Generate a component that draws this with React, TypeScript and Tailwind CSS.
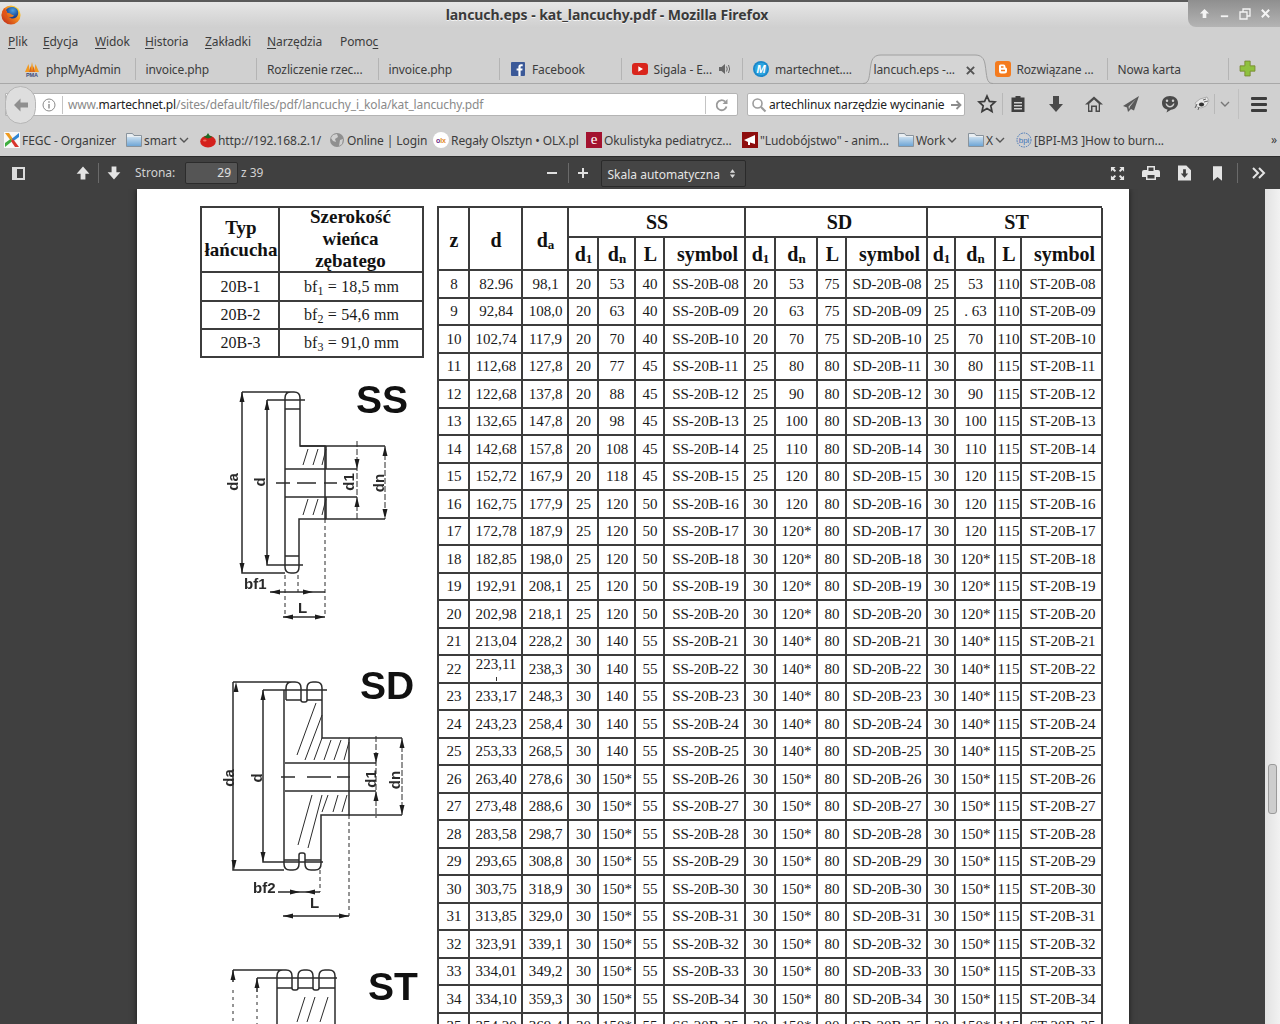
import React from "react";

const cols = "grid grid-cols-[31px_53px_46px_30px_37px_29px_81px_30px_42px_29px_81px_28px_40px_26px_81px]";
const line = "border-[#3c3c3c]";

type Row = [number, string, string, string, string, string, string, string, string, string, string, string];
const base: Row[] = [
  [8, "82.96", "98,1", "20", "53", "40", "20", "53", "75", "25", "53", "110"],
  [9, "92,84", "108,0", "20", "63", "40", "20", "63", "75", "25", ". 63", "110"],
  [10, "102,74", "117,9", "20", "70", "40", "20", "70", "75", "25", "70", "110"],
  [11, "112,68", "127,8", "20", "77", "45", "25", "80", "80", "30", "80", "115"],
  [12, "122,68", "137,8", "20", "88", "45", "25", "90", "80", "30", "90", "115"],
  [13, "132,65", "147,8", "20", "98", "45", "25", "100", "80", "30", "100", "115"],
  [14, "142,68", "157,8", "20", "108", "45", "25", "110", "80", "30", "110", "115"],
  [15, "152,72", "167,9", "20", "118", "45", "25", "120", "80", "30", "120", "115"],
  [16, "162,75", "177,9", "25", "120", "50", "30", "120", "80", "30", "120", "115"],
  [17, "172,78", "187,9", "25", "120", "50", "30", "120*", "80", "30", "120", "115"],
  [18, "182,85", "198,0", "25", "120", "50", "30", "120*", "80", "30", "120*", "115"],
  [19, "192,91", "208,1", "25", "120", "50", "30", "120*", "80", "30", "120*", "115"],
  [20, "202,98", "218,1", "25", "120", "50", "30", "120*", "80", "30", "120*", "115"],
  ...([
    [21, "213,04", "228,2"],
    [22, "223,11", "238,3"],
    [23, "233,17", "248,3"],
    [24, "243,23", "258,4"],
    [25, "253,33", "268,5"],
  ] as [number, string, string][]).map((r): Row => [r[0], r[1], r[2], "30", "140", "55", "30", "140*", "80", "30", "140*", "115"]),
  ...([
    [26, "263,40", "278,6"],
    [27, "273,48", "288,6"],
    [28, "283,58", "298,7"],
    [29, "293,65", "308,8"],
    [30, "303,75", "318,9"],
    [31, "313,85", "329,0"],
    [32, "323,91", "339,1"],
    [33, "334,01", "349,2"],
    [34, "334,10", "359,3"],
    [35, "354,20", "369,4"],
  ] as [number, string, string][]).map((r): Row => [r[0], r[1], r[2], "30", "150*", "55", "30", "150*", "80", "30", "150*", "115"]),
];

function Cell({ children, className = "", pad = "pl-[2px]" }: { children?: React.ReactNode; className?: string; pad?: string }) {
  return (
    <div className={`flex items-center justify-center border-r-2 border-b-2 ${line} whitespace-nowrap ${pad} ${className}`}>
      {children}
    </div>
  );
}

function DataRow({ r }: { r: Row }) {
  const z = String(r[0]);
  return (
    <div className={`${cols} h-[27.5px] text-[15px] text-[#1a1a1a]`}>
      <Cell>{z}</Cell>
      {r[0] === 22 ? (
        <Cell className="relative items-start">
          <span className="leading-[16px]">{r[1]}</span>
          <span className="absolute left-[26px] top-[21px] h-[4px] w-[1px] bg-[#333]" />
        </Cell>
      ) : (
        <Cell>{r[1]}</Cell>
      )}
      <Cell>{r[2]}</Cell>
      <Cell>{r[3]}</Cell>
      <Cell>{r[4]}</Cell>
      <Cell>{r[5]}</Cell>
      <Cell pad="pl-[3px]">SS-20B-{z.padStart(2, "0")}</Cell>
      <Cell>{r[6]}</Cell>
      <Cell>{r[7]}</Cell>
      <Cell>{r[8]}</Cell>
      <Cell>SD-20B-{z.padStart(2, "0")}</Cell>
      <Cell>{r[9]}</Cell>
      <Cell>{r[10]}</Cell>
      <Cell>{r[11]}</Cell>
      <Cell pad="pl-[3px]">ST-20B-{z.padStart(2, "0")}</Cell>
    </div>
  );
}

function DataTable() {
  const subScript = "bottom-[-5px] text-[13px]";
  const sub = (
    <>
      <Cell>d<sub className={subScript}>1</sub></Cell>
      <Cell>d<sub className={subScript}>n</sub></Cell>
      <Cell pad="pl-[3px]">L</Cell>
      <Cell pad="pl-[7px]">symbol</Cell>
    </>
  );
  return (
    <div className={`w-[665px] border-l-2 border-t-2 ${line}`}>
      <div className={`${cols} grid-rows-[30px_33px] text-[20px] font-bold text-[#111]`}>
        <Cell className="row-span-2 pt-[3px]">z</Cell>
        <Cell className="row-span-2 pt-[3px]">d</Cell>
        <Cell className="row-span-2 pt-[3px]">d<sub className={subScript}>a</sub></Cell>
        <Cell className="col-span-4">SS</Cell>
        <Cell className="col-span-4" pad="pl-[8px]">SD</Cell>
        <Cell className="col-span-4" pad="pl-[5px]">ST</Cell>
        {sub}
        {sub}
        {sub}
      </div>
      {base.map((r) => (
        <DataRow key={r[0]} r={r} />
      ))}
    </div>
  );
}

function ChainTable() {
  return (
    <div className={`w-[224px] border-l-2 border-t-2 ${line} grid grid-cols-[78px_144px] grid-rows-[65px_29px_28px_28px] text-[16px] text-[#1a1a1a]`}>
      <Cell pad="pl-[3px]" className="pb-[2px] text-center text-[19px] font-bold leading-[22px] text-[#111]">
        <span>Typ<br />łańcucha</span>
      </Cell>
      <Cell pad="pl-0" className="pb-[2px] text-center text-[19px] font-bold leading-[22px] text-[#111]">
        <span>Szerokość<br />wieńca<br />zębatego</span>
      </Cell>
      <Cell>20B-1</Cell>
      <Cell className="tracking-[0.15px]"><span>bf<sub>1</sub> = 18,5 mm</span></Cell>
      <Cell>20B-2</Cell>
      <Cell className="tracking-[0.15px]"><span>bf<sub>2</sub> = 54,6 mm</span></Cell>
      <Cell>20B-3</Cell>
      <Cell className="tracking-[0.15px]"><span>bf<sub>3</sub> = 91,0 mm</span></Cell>
    </div>
  );
}

function Arrow({ x, y, dir }: { x: number; y: number; dir: "u" | "d" | "l" | "r" }) {
  const p =
    dir === "u" ? `${x},${y} ${x - 2.5},${y + 10} ${x + 2.5},${y + 10}` :
    dir === "d" ? `${x},${y} ${x - 2.5},${y - 10} ${x + 2.5},${y - 10}` :
    dir === "l" ? `${x},${y} ${x + 10},${y - 2.5} ${x + 10},${y + 2.5}` :
    `${x},${y} ${x - 10},${y - 2.5} ${x - 10},${y + 2.5}`;
  return <polygon points={p} fill="#1c1c1c" stroke="none" />;
}

const dimText = { fontFamily: "'Liberation Sans',sans-serif", fontWeight: 700, fontSize: 15, fill: "#2a2a2a", stroke: "none" } as const;
const bigText = { fontFamily: "'Liberation Sans',sans-serif", fontWeight: 700, fontSize: 39, fill: "#111", stroke: "none" } as const;

function V({ x, y, t }: { x: number; y: number; t: string }) {
  return (
    <text x={x} y={y} textAnchor="middle" transform={`rotate(-90 ${x} ${y})`} style={dimText}>
      {t}
    </text>
  );
}

function Diagrams() {
  return (
    <svg viewBox="200 358 240 666" className="block h-[666px] w-[240px] blur-[0.35px]" fill="none" stroke="#2b2b2b" strokeWidth="1.5">
      {/* SS */}
      <text x="356" y="413" style={bigText}>SS</text>
      <path d="M242 392H291Q285 392 285 398V567Q285 573 291 573H294Q299 573 299 567V519H325V446H300V398Q300 392 294 392H291" />
      <path d="M285 409H300M285 556H299M285 469H326V446M285 497H326V519M326 469H357M326 497H357M300 446H385M325 519H385" />
      <path d="M242 392V573H285M267 400V565H303M267 400H305" />
      <path d="M325 519V617M285 575V617M298 575V592" strokeDasharray="4 3" strokeWidth="1" />
      <path d="M276 483H290M297 483H316M324 483H337" />
      <path d="M303 465L308 449M313 465L318 449M322 465L326 449M303 515L308 499M313 515L318 499M322 515L326 499" strokeWidth="1" />
      <path d="M357 441V521M385 446V519" strokeWidth="1" strokeDasharray="6 2" />
      <path d="M270 592H325M283 617H325" />
      <Arrow x={242} y={392} dir="u" /><Arrow x={242} y={573} dir="d" />
      <Arrow x={267} y={400} dir="u" /><Arrow x={267} y={565} dir="d" />
      <Arrow x={357} y={469} dir="d" /><Arrow x={357} y={497} dir="u" />
      <Arrow x={385} y={446} dir="u" /><Arrow x={385} y={519} dir="d" />
      <Arrow x={270} y={592} dir="l" /><Arrow x={313} y={592} dir="r" />
      <Arrow x={283} y={617} dir="l" /><Arrow x={325} y={617} dir="r" />
      <V x={238} y={482} t="da" /><V x={265} y={482} t="d" /><V x={354} y={482} t="d1" /><V x={384} y={483} t="dn" />
      <text x="244" y="589" style={dimText}>bf1</text>
      <text x="298" y="613" style={dimText}>L</text>

      {/* SD */}
      <text x="360" y="699" style={bigText}>SD</text>
      <path d="M233 682H292Q286 682 286 688V700M286 700H301V688Q301 682 295 682H292M301 700Q301 702 303 702H305Q307 702 307 700V688Q307 682 313 682H316Q322 682 322 688V738H349V815H321V864Q321 870 315 870H311Q305 870 305 864V855Q305 853 303 853H301Q299 853 299 855V864Q299 870 293 870H290Q284 870 284 864V690" />
      <path d="M307 700H322M284 860H299M305 860H321M285 763H376M285 791H376M349 738H402M349 815H402" />
      <path d="M233 682V870H284M263 690H327M263 690V862H323" />
      <path d="M349 815V916M320 870V892" strokeDasharray="4 3" strokeWidth="1" />
      <path d="M281 777H295M307 777H331M337 777H350" />
      <path d="M297 755L316 703M305 760L322 715M314 760L322 738M324 760L331 740M334 760L341 740M344 760L349 742M298 845L312 795M308 848L322 795M322 812L328 795M333 812L338 795M342 812L347 795" strokeWidth="1" />
      <path d="M376 736V818M402 738V815" strokeWidth="1" strokeDasharray="6 2" />
      <path d="M278 892H320M283 916H349" />
      <Arrow x={236} y={682} dir="u" /><Arrow x={234} y={870} dir="d" />
      <Arrow x={263} y={690} dir="u" /><Arrow x={263} y={862} dir="d" />
      <Arrow x={376} y={763} dir="d" /><Arrow x={376} y={791} dir="u" />
      <Arrow x={402} y={738} dir="u" /><Arrow x={402} y={815} dir="d" />
      <Arrow x={300} y={892} dir="r" /><Arrow x={305} y={892} dir="l" />
      <Arrow x={283} y={916} dir="l" /><Arrow x={349} y={916} dir="r" />
      <V x={234} y={778} t="da" /><V x={262} y={778} t="d" /><V x={376} y={779} t="d1" /><V x={400} y={780} t="dn" />
      <text x="253" y="893" style={dimText}>bf2</text>
      <text x="310" y="908" style={dimText}>L</text>

      {/* ST */}
      <text x="368" y="1000" style={bigText}>ST</text>
      <path d="M233 970H283Q277 970 277 976V1024M277 988H292V976Q292 970 286 970H283M292 988Q292 990 294 990H296Q298 990 298 988V976Q298 970 304 970H307Q313 970 313 976V988Q313 990 315 990H317Q319 990 319 988V976Q319 970 325 970H329Q335 970 335 976V1024M298 988H313M319 988H335M257 978H337M257 978V992M233 970V982" />
      <path d="M233 990V1024M257 995V1024" strokeDasharray="3 4" strokeWidth="1" />
      <path d="M297 1022L305 997M307 1022L315 997M320 1022L328 997" strokeWidth="1" />
      <Arrow x={233} y={970} dir="u" /><Arrow x={257} y={978} dir="u" />
    </svg>
  );
}

/* ---------- icons ---------- */

function FirefoxLogo() {
  return (
    <svg viewBox="0 0 20 20" className="h-[20px] w-[20px]">
      <defs>
        <radialGradient id="fxb" cx="55%" cy="30%" r="60%">
          <stop offset="0%" stopColor="#4aa0e0" />
          <stop offset="100%" stopColor="#17408f" />
        </radialGradient>
        <linearGradient id="fxo" x1="0.9" y1="0.2" x2="0.2" y2="0.9">
          <stop offset="0%" stopColor="#f9d63a" />
          <stop offset="45%" stopColor="#f0821c" />
          <stop offset="100%" stopColor="#c8381a" />
        </linearGradient>
      </defs>
      <circle cx="10" cy="10" r="9.6" fill="url(#fxo)" />
      <path d="M5 5C7 1.5 13 0.8 16 4C18 7 17.5 10.5 15 12.5C13 14 9.5 13.8 8 12C10 12.5 12 12 13 10.5C11.5 10 9.5 9.5 9 8.3C8 8.3 6.5 8 6 7.5C6.3 6.5 5.5 6 5 5Z" fill="url(#fxb)" />
      <path d="M1 8C2 5 3 4 4 3C4 5 5 6 6 7C5 9 6 11 7.5 12.5C5 12 3 11 1 8Z" fill="#e2541a" />
    </svg>
  );
}

function PmaIcon() {
  return (
    <svg viewBox="0 0 16 16" className="h-[16px] w-[16px] shrink-0">
      <path d="M1 11L4.5 3L6 11ZM6 11L8 1L10 11ZM10 11L11.5 3L15 11Z" fill="#f29a1f" />
      <path d="M5 11L6.5 5L8 11ZM8 11L9.5 5L11 11Z" fill="#d9661f" />
      <text x="8" y="16" textAnchor="middle" fontSize="5.5" fontWeight="700" fill="#3c4a78" fontFamily="'Liberation Sans',sans-serif">PMA</text>
    </svg>
  );
}

function FolderIcon() {
  return (
    <svg viewBox="0 0 16 16" className="h-[16px] w-[16px] shrink-0">
      <defs>
        <linearGradient id="fld" x1="0" y1="0" x2="0" y2="1">
          <stop offset="0%" stopColor="#c9deef" />
          <stop offset="100%" stopColor="#6fa6d6" />
        </linearGradient>
      </defs>
      <path d="M0.5 1.5H6.5L8 3.5H15.5V14.5H0.5Z" fill="#e9eef2" stroke="#7f8a94" strokeWidth="0.9" />
      <path d="M1 5H15V14H1Z" fill="url(#fld)" />
    </svg>
  );
}

function ChevDown({ color = "#555" }: { color?: string }) {
  return (
    <svg viewBox="0 0 10 6" className="h-[6px] w-[10px] shrink-0" fill="none" stroke={color} strokeWidth="1.4">
      <path d="M1 1L5 5L9 1" />
    </svg>
  );
}

function Tb({ d, size = 20, fill = "#4a4a4a" }: { d: string; size?: number; fill?: string }) {
  return (
    <svg viewBox="0 0 20 20" style={{ width: size, height: size }} className="shrink-0">
      <path d={d} fill={fill} fillRule="evenodd" />
    </svg>
  );
}

/* ---------- browser chrome ---------- */

function TitleBar() {
  return (
    <div className="relative flex h-[28px] items-center justify-center border-t-2 border-[#5a5a5a] bg-gradient-to-b from-[#e6e6e6] to-[#cfcfcf] pb-[2px]">
      <div className="absolute left-[1px] top-[3px]"><FirefoxLogo /></div>
      <span className="ml-[-66px] text-[14px] font-bold tracking-[-0.05px] text-[#3a3a3a] [text-shadow:0_1px_0_#f4f4f4]">
        lancuch.eps - kat_lancuchy.pdf - Mozilla Firefox
      </span>
      <div className="absolute right-0 top-[-2px] flex h-[27px] w-[92px] items-center justify-around rounded-bl-lg bg-gradient-to-b from-[#8f8f8f] to-[#b4b4b4] px-[4px] pl-[6px]">
        <svg viewBox="0 0 12 12" className="h-[11px] w-[11px]"><path d="M6 1L11 6H8V11H4V6H1Z" fill="#f4f4f4" /></svg>
        <svg viewBox="0 0 12 12" className="h-[11px] w-[11px]"><path d="M2 8H10V10H2Z" fill="#f4f4f4" /></svg>
        <svg viewBox="0 0 12 12" className="h-[12px] w-[12px]" fill="none" stroke="#f4f4f4" strokeWidth="1.3"><path d="M1 4H8V11H1ZM4 4V1H11V8H8" /></svg>
        <svg viewBox="0 0 12 12" className="h-[11px] w-[11px]" fill="none" stroke="#f4f4f4" strokeWidth="2.2"><path d="M2 2L10 10M10 2L2 10" /></svg>
      </div>
    </div>
  );
}

function MenuItem({ w, u, rest, tail }: { w: number; u?: string; rest: string; tail?: string }) {
  return (
    <span style={{ width: w }} className="shrink-0 whitespace-nowrap">
      {u && <span className="underline underline-offset-2">{u}</span>}
      {rest}
      {tail && <span className="underline underline-offset-2">{tail}</span>}
    </span>
  );
}

function MenuBar() {
  return (
    <div className="flex h-[26px] items-center pl-[8px] pt-[2px] text-[12px] tracking-[-0.1px] text-[#3c3c3c]">
      <MenuItem w={35} u="P" rest="lik" />
      <MenuItem w={52} u="E" rest="dycja" />
      <MenuItem w={50} u="W" rest="idok" />
      <MenuItem w={60} u="H" rest="istoria" />
      <MenuItem w={62} u="Z" rest="akładki" />
      <MenuItem w={73} u="N" rest="arzędzia" />
      <MenuItem w={40} rest="Pomo" tail="c" />
    </div>
  );
}

function Tab({ icon, text, extra, last, pl = "pl-[10px]", gap = "gap-[6px]" }: { icon?: React.ReactNode; text: string; extra?: React.ReactNode; last?: boolean; pl?: string; gap?: string }) {
  return (
    <div className={`flex h-[22px] w-[121.5px] shrink-0 items-center ${gap} whitespace-nowrap ${pl} ${last ? "" : "border-r border-[#b4b4b4]"}`}>
      {icon}
      <span className="pt-[2px]">{text}</span>
      {extra}
    </div>
  );
}

function TabBar() {
  return (
    <div className="relative flex h-[30px] items-center border-b border-[#a8a8a8] pl-[14px] text-[12px] tracking-[-0.12px] text-[#3c3c3c]">
      <Tab icon={<PmaIcon />} text="phpMyAdmin" />
      <Tab text="invoice.php" />
      <Tab text="Rozliczenie rzec..." />
      <Tab text="invoice.php" />
      <Tab
        pl="pl-[11px]"
        gap="gap-[7px]"
        icon={
          <svg viewBox="0 0 14 14" className="h-[14px] w-[14px] shrink-0">
            <rect width="14" height="14" rx="1" fill="#3b5998" />
            <path d="M9.6 14V8.6H11.3L11.6 6.5H9.6V5.2C9.6 4.6 9.8 4.2 10.6 4.2H11.7V2.3C11.5 2.3 10.9 2.2 10.1 2.2C8.5 2.2 7.4 3.2 7.4 5V6.5H5.6V8.6H7.4V14Z" fill="#fff" />
          </svg>
        }
        text="Facebook"
      />
      <Tab
        icon={
          <svg viewBox="0 0 16 12" className="h-[12px] w-[16px] shrink-0">
            <rect width="16" height="12" rx="3" fill="#d9251c" />
            <path d="M6.3 3.2L11 6L6.3 8.8Z" fill="#fff" />
          </svg>
        }
        text="Sigala - E..."
        extra={
          <svg viewBox="0 0 14 14" className="h-[14px] w-[14px]" fill="#666">
            <path d="M1 5H3.5L7 2V12L3.5 9H1Z" />
            <path d="M8.5 4.5Q10 7 8.5 9.5M10.5 3Q12.8 7 10.5 11" fill="none" stroke="#666" strokeWidth="1" />
          </svg>
        }
      />
      <Tab
        icon={
          <svg viewBox="0 0 16 16" className="h-[16px] w-[16px] shrink-0">
            <circle cx="8" cy="8" r="8" fill="#1b87c9" />
            <circle cx="8" cy="8" r="6.2" fill="#2ba4e0" />
            <text x="8" y="12" textAnchor="middle" fontSize="11" fontWeight="700" fontStyle="italic" fill="#fff" fontFamily="'Liberation Sans',sans-serif">M</text>
          </svg>
        }
        text="martechnet...."
        last
      />
      <div className="relative z-10 ml-[-2px] flex h-[30px] w-[130px] shrink-0 items-center pl-[11px] pt-[3px]">
        <svg viewBox="0 0 130 30" className="absolute inset-0 h-full w-full" fill="none">
          <path d="M0 29.5C7 29.5 6 22 8 10C9 4 12 1 18 1H112C118 1 121 4 122 10C124 22 123 29.5 130 29.5Z" fill="#d5d5d5" />
          <path d="M0 29.5C7 29.5 6 22 8 10C9 4 12 1 18 1H112C118 1 121 4 122 10C124 22 123 29.5 130 29.5" stroke="#a0a0a0" strokeWidth="1" />
        </svg>
        <span className="relative whitespace-nowrap">lancuch.eps -...</span>
        <svg viewBox="0 0 10 10" className="absolute left-[103px] top-[12px] h-[9px] w-[9px]" fill="none" stroke="#555" strokeWidth="2.2">
          <path d="M1 1L9 9M9 1L1 9" />
        </svg>
      </div>
      <div className="flex h-[22px] w-[115px] shrink-0 items-center gap-[6px] whitespace-nowrap border-r border-[#b4b4b4] pl-[2px]">
        <svg viewBox="0 0 16 16" className="h-[16px] w-[16px] shrink-0">
          <rect width="16" height="16" rx="3" fill="#f47b1e" />
          <path d="M5.5 3.5H8.5Q10.5 3.5 10.5 6.5Q12 6.5 12 8V10Q12 12.5 9.5 12.5H6Q4 12.5 4 10V5Q4 3.5 5.5 3.5Z" fill="#fff" />
          <path d="M6 6H8.5M6 9.5H10" stroke="#f47b1e" strokeWidth="1.3" />
        </svg>
        <span className="pt-[2px]">Rozwiązane ...</span>
      </div>
      <Tab text="Nowa karta" />
      <svg viewBox="0 0 16 16" className="ml-[10px] h-[17px] w-[17px]">
        <path d="M5.5 1H10.5V5.5H15V10.5H10.5V15H5.5V10.5H1V5.5H5.5Z" fill="#8fc13e" stroke="#76872f" strokeWidth="0.8" />
      </svg>
    </div>
  );
}

function NavBar() {
  return (
    <div className="flex h-[40px] items-center text-[12px] tracking-[-0.14px]">
      <div className="relative ml-[5px] flex h-[23px] w-[733px] shrink-0 items-center rounded-r-[2px] border border-[#b4b4b4] bg-white pl-[62px] pt-[1px]">
        <div className="absolute left-[-1px] top-[-8px] flex h-[38px] w-[31px] items-center justify-center rounded-full border border-[#b6b6b6] bg-[#dedede]">
          <svg viewBox="0 0 16 16" className="h-[16px] w-[16px]"><path d="M7.5 1.5L1 8L7.5 14.5V10.5H15V5.5H7.5Z" fill="#8f8f8f" /></svg>
        </div>
        <svg viewBox="0 0 14 14" className="absolute left-[36px] top-[4px] h-[14px] w-[14px]" fill="none" stroke="#8a8a8a">
          <circle cx="7" cy="7" r="6" />
          <path d="M7 6V10.5M7 3.2V4.8" strokeWidth="1.4" />
        </svg>
        <span className="absolute left-[56px] top-[2px] h-[18px] w-px bg-[#c4c4c4]" />
        <span className="whitespace-nowrap text-[#8a8a8a]">
          www.<span className="text-[#222]">martechnet.pl</span>/sites/default/files/pdf/lancuchy_i_kola/kat_lancuchy.pdf
        </span>
        <span className="absolute left-[699px] top-[2px] h-[18px] w-px bg-[#c4c4c4]" />
        <svg viewBox="0 0 14 14" className="absolute left-[709px] top-[4px] h-[14px] w-[14px]" fill="none" stroke="#9a9a9a" strokeWidth="1.8">
          <path d="M11.5 8.5A5 5 0 1 1 10 3.5" />
          <path d="M12.5 1V6H7.5Z" fill="#9a9a9a" stroke="none" />
        </svg>
      </div>
      <div className="relative ml-[9px] flex h-[23px] w-[218px] shrink-0 items-center rounded-[2px] border border-[#b4b4b4] bg-white pl-[21px] pt-[1px] text-[#222]">
        <svg viewBox="0 0 16 16" className="absolute left-[3px] top-[3px] h-[16px] w-[16px]" fill="none" stroke="#9c9c9c" strokeWidth="1.6">
          <circle cx="6.5" cy="6.5" r="4.5" />
          <path d="M10 10L14.5 14.5" strokeWidth="2.2" />
        </svg>
        <span className="whitespace-nowrap">artechlinux narzędzie wycinanie</span>
        <svg viewBox="0 0 12 12" className="absolute right-[2px] top-[5px] h-[12px] w-[12px]" fill="none" stroke="#8d8d8d" strokeWidth="1.8">
          <path d="M1 6H10M6.5 2L10.5 6L6.5 10" />
        </svg>
      </div>
      <div className="ml-[12px] flex shrink-0 items-center">
        <svg viewBox="0 0 20 20" className="h-[20px] w-[20px]" fill="none" stroke="#3c3c3c" strokeWidth="1.7">
          <path d="M10 2L12.4 7.4L18 8L13.8 11.8L15 17.5L10 14.6L5 17.5L6.2 11.8L2 8L7.6 7.4Z" />
        </svg>
        <span className="ml-[5px] h-[22px] w-px bg-[#b8b8b8]" />
        <div className="ml-[5px] w-[38px]">
          <Tb d="M7.5 2H12.5V3.5H16.5V18H3.5V3.5H7.5ZM6 8V9.5H14V8ZM6 11V12.5H14V11ZM6 14V15.5H14V14Z" fill="#3f3f3f" />
        </div>
        <div className="w-[38px]"><Tb d="M7 2H13V10H17L10 18L3 10H7Z" /></div>
        <div className="w-[37px]"><Tb d="M10 2.5L1 10.5H4V18H8.5V13H11.5V18H16V10.5H19ZM10 5.5L14.7 9.8V16.5H13V11.5H7V16.5H5.3V9.8Z" /></div>
        <div className="w-[39px]"><Tb d="M18 2L2 12L6 13.5L7 18L10 15L13 16.5ZM15 5L7.5 12.5L8 15.5L9 12.5Z" fill="#5a5a5a" /></div>
        <div className="w-[34px]"><Tb d="M10 2C5 2 2 5 2 9C2 12.5 4.5 15 7.5 15.6L6.5 18.5L11 15.8C15 15.4 18 12.5 18 9C18 5 15 2 10 2ZM7 5.5A1.2 1.2 0 1 1 7 8A1.2 1.2 0 1 1 7 5.5ZM13 5.5A1.2 1.2 0 1 1 13 8A1.2 1.2 0 1 1 13 5.5ZM5.5 9.5H6.8C7.5 11 8.5 12 10 12C11.5 12 12.5 11 13.2 9.5H14.5C14 12 12 13.5 10 13.5C8 13.5 6 12 5.5 9.5Z" /></div>
        <div className="w-[15px]">
          <svg viewBox="0 0 16 16" className="h-[16px] w-[16px]">
            <path d="M1 7L6 3L13 1L15 5L12 10L7 12L3 11Z" fill="#e8e8e8" stroke="#9a9a9a" strokeWidth="0.7" />
            <ellipse cx="7.5" cy="8.5" rx="2.6" ry="2" fill="#333" />
            <path d="M9 4L12 3M10 6L14 5M3 8L1 12M5 11L4 14" stroke="#555" strokeWidth="0.9" />
          </svg>
        </div>
        <span className="ml-[5px] h-[20px] w-px bg-[#b8b8b8]" />
        <span className="ml-[5px]"><ChevDown color="#777" /></span>
        <span className="ml-[8px] h-[30px] w-px bg-[#c0c0c0]" />
        <div className="ml-[12px] flex w-[16px] flex-col gap-[3px]">
          <span className="h-[3px] rounded-[1px] bg-[#3c3c3c]" />
          <span className="h-[3px] rounded-[1px] bg-[#3c3c3c]" />
          <span className="h-[3px] rounded-[1px] bg-[#3c3c3c]" />
        </div>
      </div>
    </div>
  );
}

function Bm({ w, icon, text, chev }: { w: number; icon: React.ReactNode; text: string; chev?: boolean }) {
  return (
    <div style={{ width: w }} className="flex shrink-0 items-center gap-[2px] whitespace-nowrap">
      {icon}
      <span className="pt-[2px]">{text}</span>
      {chev && <ChevDown />}
    </div>
  );
}

function BookmarksBar() {
  return (
    <div className="relative flex h-[32px] items-center pl-[4px] text-[12px] tracking-[-0.08px] text-[#3c3c3c]">
      <Bm
        w={122}
        text="FEGC - Organizer"
        icon={
          <svg viewBox="0 0 16 16" className="h-[16px] w-[16px] shrink-0">
            <rect width="16" height="16" fill="#f8f8f8" />
            <path d="M1 1H5L9 7L7 9Z" fill="#ef9a1f" />
            <path d="M15 1V5L9.5 9L7.5 7Z" fill="#2f86d4" />
            <path d="M1 15V11L6.5 7L8.5 9Z" fill="#3fae3f" />
            <path d="M15 15H11L7 9L9 7Z" fill="#d9352c" />
          </svg>
        }
      />
      <Bm w={74} text="smart" chev icon={<FolderIcon />} />
      <Bm
        w={129}
        text="http://192.168.2.1/"
        icon={
          <svg viewBox="0 0 16 16" className="h-[16px] w-[16px] shrink-0">
            <ellipse cx="8" cy="9.5" rx="7.8" ry="6" fill="#d4201c" />
            <path d="M3.5 5L8 6.5L12.5 5L9.5 3.5L8 1L6.5 3.5Z" fill="#1d6b24" />
            <ellipse cx="4.8" cy="8.5" rx="1.8" ry="1" fill="#ee6d5e" />
          </svg>
        }
      />
      <Bm
        w={104}
        text="Online | Login"
        icon={
          <svg viewBox="0 0 16 16" className="h-[16px] w-[16px] shrink-0">
            <circle cx="8" cy="8" r="7" fill="#8f8f8f" />
            <path d="M4 3L8 2L9 5L6 7L7 10L4 9L2 6ZM11 8L14 7L13 12L10 14Z" fill="#d0d0d0" />
          </svg>
        }
      />
      <Bm
        w={153}
        text="Regały Olsztyn • OLX.pl"
        icon={
          <svg viewBox="0 0 16 16" className="h-[16px] w-[16px] shrink-0">
            <circle cx="8" cy="8" r="8" fill="#fff" />
            <text x="8" y="10.5" textAnchor="middle" fontSize="7" fontWeight="700" fill="#6b2a86" fontFamily="'Liberation Sans',sans-serif">o<tspan fill="#e38a1c">lx</tspan></text>
          </svg>
        }
      />
      <Bm
        w={156}
        text="Okulistyka pediatrycz..."
        icon={
          <svg viewBox="0 0 16 16" className="h-[16px] w-[16px] shrink-0">
            <rect width="16" height="16" fill="#a3122f" />
            <text x="8" y="12" textAnchor="middle" fontSize="15" fill="#fff" fontFamily="'Liberation Serif',serif">e</text>
          </svg>
        }
      />
      <Bm
        w={156}
        text={'"Ludobójstwo" - anim...'}
        icon={
          <svg viewBox="0 0 16 16" className="h-[16px] w-[16px] shrink-0">
            <rect width="16" height="16" fill="#8e0d0d" />
            <path d="M2 8L13 3V12L8 10.5V13H6V10Z" fill="#fff" />
          </svg>
        }
      />
      <Bm w={70} text="Work" chev icon={<FolderIcon />} />
      <Bm w={48} text="X" chev icon={<FolderIcon />} />
      <Bm
        w={156}
        text="[BPI-M3 ]How to burn..."
        icon={
          <svg viewBox="0 0 16 16" className="h-[16px] w-[16px] shrink-0" fill="none">
            <circle cx="8" cy="8" r="7" stroke="#3f74b8" strokeDasharray="1.5 1" />
            <text x="8" y="11" textAnchor="middle" fontSize="8" fill="#3f74b8" fontFamily="'Liberation Sans',sans-serif">bpi</text>
          </svg>
        }
      />
      <span className="absolute right-[3px] top-[7px] text-[12px]">»</span>
    </div>
  );
}

function PdfToolbar() {
  return (
    <div className="flex h-[33px] items-center border-t border-[#2c2c2c] bg-[#404040] text-[12px] text-[#d2d2d2]">
      <div className="ml-[12px] flex h-[13px] w-[13px] border-2 border-[#dcdcdc]">
        <span className="w-[3px] bg-[#dcdcdc]" />
      </div>
      <div className="ml-[50px]"><Tb size={16} fill="#e4e4e4" d="M10 2L18 11H13V18H7V11H2Z" /></div>
      <span className="ml-[7px] h-[20px] w-px bg-[#6a6a6a]" />
      <div className="ml-[7px]"><Tb size={16} fill="#e4e4e4" d="M7 2H13V9H18L10 18L2 9H7Z" /></div>
      <span className="ml-[13px] w-[50px]">Strona:</span>
      <div className="flex h-[22px] w-[53px] items-center justify-end rounded-[2px] border border-[#2c2c2c] bg-[#555] pr-[6px] text-[#e0e0e0]">29</div>
      <span className="ml-[3px]">z 39</span>
      <div className="ml-[283px] h-[2px] w-[10px] bg-[#e0e0e0]" />
      <span className="ml-[11px] h-[20px] w-px bg-[#6a6a6a]" />
      <svg viewBox="0 0 10 10" className="ml-[9px] h-[10px] w-[10px]" fill="#e0e0e0"><path d="M4 0H6V4H10V6H6V10H4V6H0V4H4Z" /></svg>
      <div className="relative ml-[13px] flex h-[27px] w-[145px] items-center rounded-[2px] border border-[#2a2a2a] bg-[#454545] pl-[6px] pt-[3px] text-[#e4e4e4]">
        <span className="whitespace-nowrap">Skala automatyczna</span>
        <svg viewBox="0 0 8 12" className="absolute right-[9px] top-[7px] h-[11px] w-[7px]" fill="#d8d8d8"><path d="M4 1L7 5H1ZM4 11L1 7H7Z" /></svg>
      </div>
      <svg viewBox="0 0 16 16" className="ml-[364px] h-[15px] w-[15px]" fill="#e4e4e4">
        <path d="M1 1H6L4.3 2.7L6.5 5L5 6.5L2.7 4.3L1 6ZM15 1V6L13.3 4.3L11 6.5L9.5 5L11.7 2.7L10 1ZM1 15V10L2.7 11.7L5 9.5L6.5 11L4.3 13.3L6 15ZM15 15H10L11.7 13.3L9.5 11L11 9.5L13.3 11.7L15 10Z" />
      </svg>
      <svg viewBox="0 0 18 16" className="ml-[17px] h-[16px] w-[18px]" fill="#e4e4e4" fillRule="evenodd">
        <path d="M5 1H13V5H16Q18 5 18 7V12H14V15H4V12H0V7Q0 5 2 5H5ZM6.5 2.5V6H11.5V2.5ZM5.5 10V13.5H12.5V10Z" />
      </svg>
      <svg viewBox="0 0 14 16" className="ml-[18px] h-[16px] w-[13px]" fill="#e4e4e4" fillRule="evenodd">
        <path d="M0 0H9L14 5V16H0ZM5.5 4V8.5H3L7 13L11 8.5H8.5V4Z" />
      </svg>
      <svg viewBox="0 0 10 16" className="ml-[22px] h-[15px] w-[9px]" fill="#e4e4e4"><path d="M0 0H10V16L5 12L0 16Z" /></svg>
      <span className="ml-[15px] h-[20px] w-px bg-[#6a6a6a]" />
      <svg viewBox="0 0 14 12" className="ml-[14px] h-[12px] w-[14px]" fill="none" stroke="#e4e4e4" strokeWidth="2"><path d="M1 1L6 6L1 11M7 1L12 6L7 11" /></svg>
    </div>
  );
}

function Page() {
  return (
    <div className="flex h-full w-[992px] gap-[13px] overflow-hidden bg-white pl-[63px] pt-[17px] shadow-[0_0_6px_rgba(0,0,0,0.6)] font-['Liberation_Serif',serif]">
      <div className="w-[224px] shrink-0">
        <ChainTable />
        <Diagrams />
      </div>
      <DataTable />
    </div>
  );
}

export default function App() {
  return (
    <div className="flex h-screen w-full flex-col overflow-hidden bg-[#d0d0d0] font-['Noto_Sans',sans-serif]">
      <TitleBar />
      <MenuBar />
      <TabBar />
      <NavBar />
      <BookmarksBar />
      <PdfToolbar />
      <div className="flex min-h-0 flex-1">
        <div className="flex min-w-0 flex-1 justify-center overflow-hidden bg-[#404040]">
          <Page />
        </div>
        <div className="relative w-[15px] shrink-0 bg-gradient-to-r from-[#e2e2e2] to-[#f2f2f2]">
          <div className="absolute left-[3px] top-[575px] h-[50px] w-[9px] rounded-[3px] border border-[#9a9a9a] bg-[#cdcdcd]" />
        </div>
      </div>
    </div>
  );
}
